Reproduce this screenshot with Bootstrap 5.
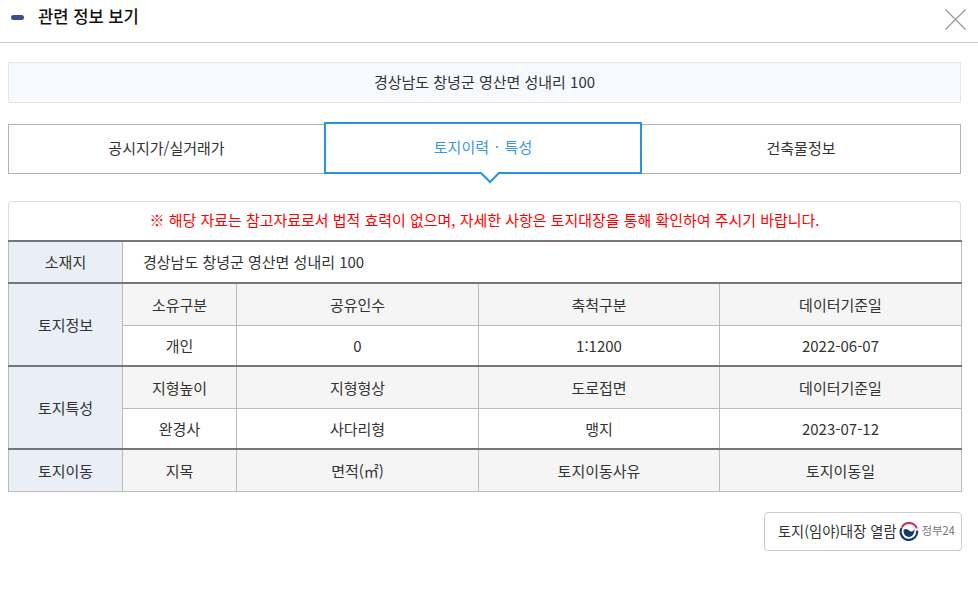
<!DOCTYPE html>
<html lang="ko">
<head>
<meta charset="utf-8">
<title>관련 정보 보기</title>
<link href="https://cdn.jsdelivr.net/npm/bootstrap@5.3.0/dist/css/bootstrap.min.css" rel="stylesheet">
<style>
html,body{height:100%;overflow:hidden}
body{font-family:"Noto Sans CJK KR","Noto Sans",sans-serif;font-size:15px;color:#333;background:#fff}
.pop-head{height:43px;border-bottom:1px solid #ccc;padding:0 12px 8px 11px}
.pop-dash{width:13px;height:5px;border-radius:3px;background:#3f4a94;margin-right:14px}
.pop-title{font-size:16.6px;font-weight:500;color:#111;margin:0;line-height:1;position:relative;top:-1px}
.pop-close{width:21px;height:21px;padding:0;border:0;background:none}
.pop-body{padding:0 17px 0 8px}
.addr-box{height:41px;margin-top:19px;background:#f6f9fe;border:1px solid #e6e6e6;color:#333}
.tab-row{margin-top:20px;height:51px}
.tab-item{flex:1 1 0;border:1px solid #b3b3b3;background:#fff;color:#333;height:50px;margin-top:1px;border-radius:0;font-size:15px;padding:0 0 2px}
.tab-item:hover{background:#fff;color:#333}
.tab-a{flex:0 0 316px;border-right:0}
.tab-c{flex:1 1 0;border-left:0}
.tab-b{flex:0 0 318px;height:52px;margin-top:-1px;border:2px solid #2795dd;color:#3b97dc;position:relative;word-spacing:1.5px}
.tab-b:hover{color:#3b97dc}
.tab-tip{position:absolute;left:50%;bottom:-12px;width:20px;height:12px;margin-left:-3px;display:block}
.note-box{margin-top:27px;height:39px;border:1px solid #ddd;border-bottom:0;border-radius:4px 4px 0 0;color:#f00;padding-bottom:1px;font-size:14.97px}
.info-tb{table-layout:fixed;width:953px;margin:0;border-collapse:collapse;color:#333}
.info-tb th,.info-tb td{border:1px solid #bbb;padding:1px 0 0;vertical-align:middle;text-align:center;font-weight:400;background:#fff;color:#333;box-shadow:none}
.info-tb tr{height:41px}
.info-tb tr.sec{height:42px}
.info-tb th.h-blue{background:#e9eef7}
.info-tb .h-gray{background:#f5f5f5}
.info-tb tr.sec>*{border-top:2px solid #777}
.info-tb td.addr-cell{text-align:left;padding-left:20px}
.foot-row{margin-top:20px}
.gov-btn{height:39px;width:198px;border:1px solid #ccc;border-radius:4px;background:#fff;color:#333;font-size:14.25px;padding:0 8px 1px 13px;white-space:nowrap;margin-right:-1px}
.gov-btn:hover{background:#fff;color:#333}
.gov-logo{margin-left:2px;flex:none}
.gov-24{font-size:11.5px;color:#777;margin-left:3px;letter-spacing:-.2px}
</style>
</head>
<body>
<header class="pop-head d-flex align-items-center">
  <span class="pop-dash"></span>
  <h1 class="pop-title">관련 정보 보기</h1>
  <button type="button" class="pop-close ms-auto" aria-label="닫기">
    <svg width="21" height="21" viewBox="0 0 21 21" fill="none" stroke="#999" stroke-width="1.2"><path d="M0.5 0.5 20.5 20.5M20.5 0.5 0.5 20.5"/></svg>
  </button>
</header>
<main class="pop-body">
  <div class="addr-box d-flex align-items-center justify-content-center">경상남도 창녕군 영산면 성내리 100</div>
  <nav class="tab-row d-flex">
    <button type="button" class="btn tab-item tab-a d-flex align-items-center justify-content-center">공시지가/실거래가</button>
    <button type="button" class="btn tab-item tab-b d-flex align-items-center justify-content-center">토지이력 · 특성
      <svg class="tab-tip" viewBox="0 0 20 12"><path d="M0 0 10 10 20 0" fill="#fff" stroke="#2795dd" stroke-width="2"/></svg>
    </button>
    <button type="button" class="btn tab-item tab-c d-flex align-items-center justify-content-center">건축물정보</button>
  </nav>
  <div class="note-box d-flex align-items-center justify-content-center">※ 해당 자료는 참고자료로서 법적 효력이 없으며, 자세한 사항은 토지대장을 통해 확인하여 주시기 바랍니다.</div>
  <table class="table info-tb">
    <colgroup><col style="width:114px"><col style="width:114px"><col style="width:242px"><col style="width:241px"><col style="width:242px"></colgroup>
    <tbody>
      <tr class="sec"><th class="h-blue">소재지</th><td class="addr-cell" colspan="4">경상남도 창녕군 영산면 성내리 100</td></tr>
      <tr class="sec"><th class="h-blue" rowspan="2">토지정보</th><td class="h-gray">소유구분</td><td class="h-gray">공유인수</td><td class="h-gray">축척구분</td><td class="h-gray">데이터기준일</td></tr>
      <tr><td>개인</td><td>0</td><td>1:1200</td><td>2022-06-07</td></tr>
      <tr class="sec"><th class="h-blue" rowspan="2">토지특성</th><td class="h-gray">지형높이</td><td class="h-gray">지형형상</td><td class="h-gray">도로접면</td><td class="h-gray">데이터기준일</td></tr>
      <tr><td>완경사</td><td>사다리형</td><td>맹지</td><td>2023-07-12</td></tr>
      <tr class="sec"><th class="h-blue">토지이동</th><td class="h-gray">지목</td><td class="h-gray">면적(㎡)</td><td class="h-gray">토지이동사유</td><td class="h-gray">토지이동일</td></tr>
    </tbody>
  </table>
  <div class="foot-row d-flex justify-content-end">
    <button type="button" class="btn gov-btn d-flex align-items-center">토지(임야)대장 열람
      <svg class="gov-logo" width="20" height="20" viewBox="0 0 20 20" fill="none"><path d="M2.6 7A8.2 8.2 0 1 0 18 9.5" stroke="#17396b" stroke-width="2.2"/><path d="M2.8 6.5A8.2 8.2 0 0 1 17.8 7.5" stroke="#cf2e4c" stroke-width="2"/><path d="M4.6 8.8C7.5 6.8 9.5 9.2 11 10.2 12.8 11.2 15.2 10.4 15.2 7.6 16.4 12 13.5 16 10 16 6.5 16 4 12.5 4.6 8.8Z" fill="#17396b"/></svg>
      <span class="gov-24">정부24</span>
    </button>
  </div>
</main>
<script src="https://cdn.jsdelivr.net/npm/bootstrap@5.3.0/dist/js/bootstrap.bundle.min.js"></script>
</body>
</html>
